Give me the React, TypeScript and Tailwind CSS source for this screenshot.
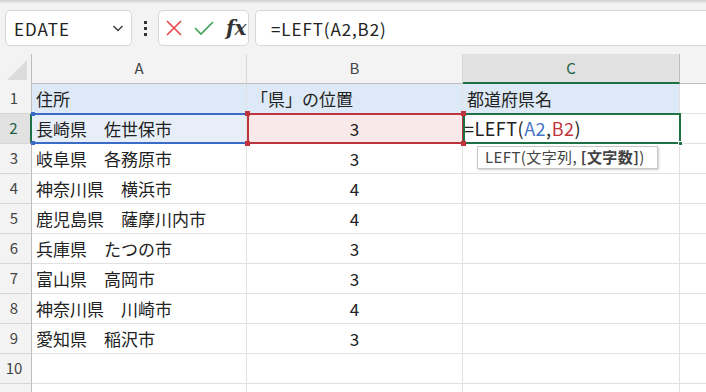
import React from "react";

const rows: [string, string][] = [
  ["住所", "「県」の位置"],
  ["長崎県　佐世保市", "3"],
  ["岐阜県　各務原市", "3"],
  ["神奈川県　横浜市", "4"],
  ["鹿児島県　薩摩川内市", "4"],
  ["兵庫県　たつの市", "3"],
  ["富山県　高岡市", "3"],
  ["神奈川県　川崎市", "4"],
  ["愛知県　稲沢市", "3"],
  ["", ""],
  ["", ""],
];

const font = { fontFamily: '"Noto Sans CJK JP", "Noto Sans", sans-serif' };

export default function App() {
  return (
    <div className="w-[706px] h-[392px] overflow-hidden bg-white relative text-[#222]" style={font}>
      {/* toolbar */}
      <div className="h-[54px] bg-[#f3f3f3] relative">
        <div className="h-[4px] bg-gradient-to-b from-[#cfcfcf] to-[#f3f3f3]" />
        <div className="flex items-center pt-[6px] pl-[5px] gap-0">
          <div className="w-[127px] h-[36px] bg-white border border-[#d6d6d6] rounded-[5px] flex items-center pl-[8px] pr-[6px] justify-between">
            <span className="text-[17px] leading-none text-[#222] tracking-[1px]">EDATE</span>
            <svg width="14" height="14" viewBox="0 0 14 14">
              <path d="M2.5 5 L7 9.5 L11.5 5" fill="none" stroke="#333" strokeWidth="1.3" />
            </svg>
          </div>
          <div className="w-[26px] flex flex-col items-center gap-[3px]">
            <div className="w-[3px] h-[3px] bg-[#333]" />
            <div className="w-[3px] h-[3px] bg-[#333]" />
            <div className="w-[3px] h-[3px] bg-[#333]" />
          </div>
          <div className="w-[91px] h-[36px] bg-white border border-[#d6d6d6] rounded-[5px] flex items-center pl-[7px] gap-[12px]">
            <svg width="16" height="16" viewBox="0 0 16 16">
              <path d="M1 1 L15 15 M15 1 L1 15" stroke="#e8474a" strokeWidth="1.6" />
            </svg>
            <svg width="20" height="16" viewBox="0 0 20 16">
              <path d="M1 8 L7 14 L19 2" fill="none" stroke="#3ea356" strokeWidth="1.6" />
            </svg>
            <span className="text-[20px] leading-none italic text-[#333]" style={{ fontFamily: '"DejaVu Serif", "Liberation Serif", serif', fontWeight: 600 }}>
              fx
            </span>
          </div>
          <div className="ml-[6px] flex-1 h-[36px] bg-white border border-[#d6d6d6] border-r-0 rounded-l-[5px] flex items-center pl-[15px]">
            <span className="text-[17px] leading-none text-[#222] tracking-[0.9px]">=LEFT(A2,B2)</span>
          </div>
        </div>
      </div>

      {/* column headers */}
      <div className="flex h-[30px] bg-[#f3f3f3]">
        <div className="w-[32px] border-r border-[#bdbdbd] relative">
          <div className="absolute right-[4px] bottom-[4px] w-0 h-0 border-l-[20px] border-l-transparent border-b-[20px] border-b-[#dcdcdc]" />
        </div>
        <div className="w-[215px] border-r border-[#d6d6d6] border-b border-b-[#bdbdbd] flex items-center justify-center text-[15px] text-[#444]">A</div>
        <div className="w-[216px] border-r border-[#d6d6d6] border-b border-b-[#bdbdbd] flex items-center justify-center text-[15px] text-[#444]">B</div>
        <div className="w-[217px] bg-[#e1e1e1] border-r border-[#bdbdbd] border-b-2 border-b-[#1e7145] flex items-center justify-center text-[15px] text-[#1e6142]">C</div>
        <div className="flex-1 border-b border-b-[#bdbdbd]" />
      </div>

      {/* rows */}
      {rows.map((r, i) => {
        const sel = i === 1;
        const head = i === 0;
        return (
          <div key={i} className="flex h-[30px]">
            <div
              className={
                "w-[32px] flex items-center justify-center pr-[3px] text-[15px] border-b border-[#d6d6d6] " +
                (sel
                  ? "bg-[#e1e1e1] text-[#1e6142] border-r-2 border-r-[#1e7145]"
                  : "bg-[#f3f3f3] text-[#444] border-r border-r-[#bdbdbd]")
              }
            >
              {i < 10 ? i + 1 : ""}
            </div>
            <div
              className={
                "w-[215px] border-r border-b border-[#e1e1e1] flex items-center pl-[4px] text-[17px] whitespace-pre " +
                (head ? "bg-[#dde9f6]" : sel ? "bg-[#e8eef8]" : "")
              }
            >
              {r[0]}
            </div>
            <div
              className={
                "w-[216px] border-r border-b border-[#e1e1e1] flex items-center text-[17px] " +
                (head ? "bg-[#dde9f6] pl-[4px]" : "justify-center ") +
                (sel ? " bg-[#f9e9e9]" : "")
              }
            >
              {r[1]}
            </div>
            <div
              className={
                "w-[217px] border-r border-b border-[#e1e1e1] flex items-center pl-[4px] text-[17px] " +
                (head ? "bg-[#dde9f6]" : "")
              }
            >
              {head ? "都道府県名" : sel ? (
                <span className="text-[18px] -ml-[3px] tracking-[0.5px]">
                  =LEFT(<span className="text-[#4472c4]">A2</span>,<span className="text-[#c0353d]">B2</span>)
                </span>
              ) : null}
            </div>
            <div className="flex-1 border-b border-[#e1e1e1]" />
          </div>
        );
      })}

      {/* selection overlays */}
      <div className="absolute left-[32px] top-[113px] w-[216px] h-[31px] border-y-2 border-[#3a6bc6] pointer-events-none" />
      <div className="absolute left-[31px] top-[112px] w-[4px] h-[4px] bg-[#3a6bc6]" />
      <div className="absolute left-[31px] top-[141px] w-[4px] h-[4px] bg-[#3a6bc6]" />
      <div className="absolute left-[247px] top-[113px] w-[217px] h-[31px] border-2 border-[#c0353d]" />
      <div className="absolute left-[463px] top-[113px] w-[218px] h-[31px] border-2 border-[#1e7145]" />
      <div className="absolute left-[245px] top-[111px] w-[5px] h-[5px] bg-[#c0353d]" />
      <div className="absolute left-[245px] top-[141px] w-[5px] h-[5px] bg-[#c0353d]" />
      <div className="absolute left-[461px] top-[111px] w-[5px] h-[5px] bg-[#c0353d]" />
      <div className="absolute left-[461px] top-[141px] w-[5px] h-[5px] bg-[#c0353d]" />
      <div className="absolute left-[678px] top-[141px] w-[5px] h-[5px] bg-[#1e7145] border border-white" />

      {/* tooltip */}
      <div className="absolute left-[477px] top-[146px] w-[181px] h-[23px] bg-white border border-[#c8c8c8] shadow-[1px_1px_2px_rgba(0,0,0,0.2)] flex items-center pl-[7px] text-[15px] text-[#444] whitespace-pre tracking-[0.4px]">
        LEFT(文字列, <b className="font-bold">[文字数]</b>)
      </div>
    </div>
  );
}
